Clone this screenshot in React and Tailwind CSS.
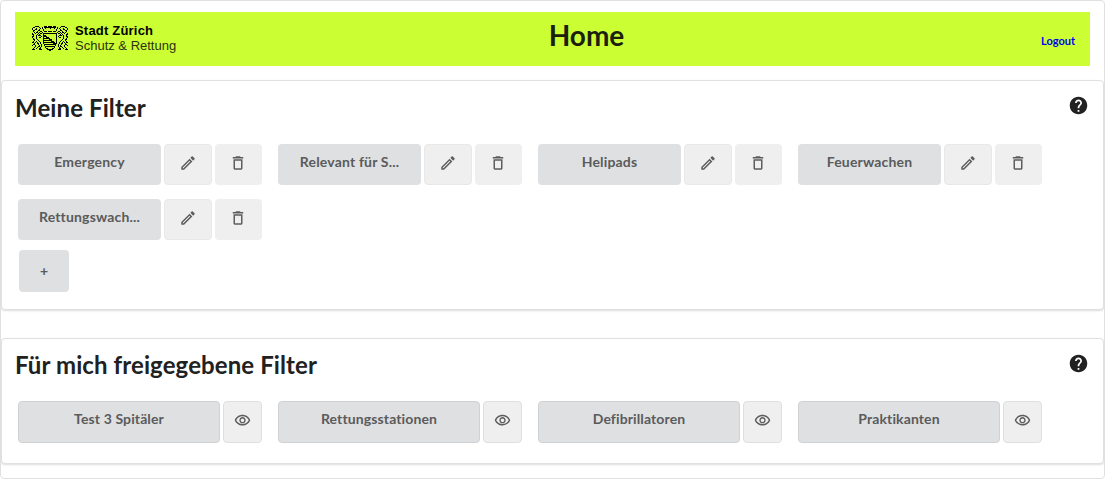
import React from "react";

const PATHS = {
  edit: "m14.06 9.02.92.92L5.92 19H5v-.92zM17.66 3c-.25 0-.51.1-.7.29l-1.83 1.83 3.75 3.75 1.83-1.83c.39-.39.39-1.02 0-1.41l-2.34-2.34c-.2-.2-.45-.29-.71-.29m-3.6 3.19L3 17.25V21h3.75L17.81 9.94z",
  trash: "M6 19c0 1.1.9 2 2 2h8c1.1 0 2-.9 2-2V7H6zM8 9h8v10H8zm7.5-5-1-1h-5l-1 1H5v2h14V4z",
  eye: "M12 6c3.79 0 7.17 2.13 8.82 5.5C19.17 14.87 15.79 17 12 17s-7.17-2.13-8.82-5.5C4.83 8.13 8.21 6 12 6m0-2C7 4 2.73 7.11 1 11.5 2.73 15.89 7 19 12 19s9.27-3.11 11-7.5C21.27 7.11 17 4 12 4m0 5c1.38 0 2.5 1.12 2.5 2.5S13.38 14 12 14s-2.5-1.12-2.5-2.5S10.62 9 12 9m0-2c-2.48 0-4.5 2.02-4.5 4.5S9.52 16 12 16s4.5-2.02 4.5-4.5S14.48 7 12 7",
  help: "M12 2C6.48 2 2 6.48 2 12s4.48 10 10 10 10-4.48 10-10S17.52 2 12 2m1 17h-2v-2h2zm2.07-7.75-.9.92C13.45 12.9 13 13.5 13 15h-2v-.5c0-1.1.45-2.1 1.17-2.83l1.24-1.26c.37-.36.59-.86.59-1.41 0-1.1-.9-2-2-2s-2 .9-2 2H8c0-2.21 1.79-4 4-4s4 1.79 4 4c0 .88-.36 1.68-.93 2.25",
};

function Icon({ name, className }) {
  return (
    <svg viewBox="0 0 24 24" fill="currentColor" className={className} aria-hidden="true">
      <path d={PATHS[name]} />
    </svg>
  );
}

// One supporter of the coat of arms, row by row on a one-unit grid.
const LION = [
  "...####....",
  ".##....#...",
  "#...#...#..",
  "#..##..#...",
  ".##...##...",
  ".#...#..##.",
  "..#.##.#..#",
  "#..#..#.##.",
  "##...#.#...",
  ".#..#.###..",
  "##..#....#.",
  "#...#..##..",
  ".#..#......",
  ".##..#.....",
  "..#...#....",
  ".#..#..#...",
  "##.#.#..#..",
  "..#..##.#..",
  ".##...#..#.",
  "#..#...#.#.",
  "...#..##.#.",
  "..#..#..#..",
  ".#..#..##..",
  "###....###.",
];

function Lion() {
  return LION.flatMap((row, y) =>
    [...row].map((cell, x) => cell === "#" && <rect key={x + "-" + y} x={x} y={y} width="1" height="1" />)
  );
}

function Crest() {
  return (
    <svg viewBox="0 0 36 26" className="mt-[14px] h-[26px] w-9 shrink-0" shapeRendering="crispEdges" aria-hidden="true">
      <Lion />
      <g transform="translate(36 0) scale(-1 1)"><Lion /></g>
      <g fill="none" stroke="#000">
        <path d="M12 .5H15M16 .5H20M21 .5H24M10.5 1V3M25.5 1V3M12 1.5H24M11.5 3V5M24.5 3V5M12 5.5H15M16 5.5H20M21 5.5H24M13.5 2V3M18 2V3M22.5 2V3" />
        <path d="M11 7.5H25M11.5 8V18M24.5 8V18M12.5 18V20M23.5 18V20M13.5 20V22M22.5 20V22M14 22.5H16M20 22.5H22M15 23.5H21M17 24.5H19" />
        <path d="M12 9.5H14M12 10.5H15M14 11.5H17M12 12.5H18M17 13.5H20M12 14.5H20M19 15.5H22M12 16.5H23M21 17.5H24M13 18.5H24M14 20.5H23" />
      </g>
    </svg>
  );
}

function Panel({ title, children, className, titleClass }) {
  return (
    <section className={"rounded border border-[#dfe0e1] bg-white pl-[14px] shadow-[0_1px_2px_rgba(34,36,38,0.15)] " + className}>
      <div className="flex h-[52px] items-start justify-between pr-[14px]">
        <h2 className={"-ml-px text-2xl leading-[30px] font-bold tracking-[0.1px] text-[#212121] " + titleClass}>{title}</h2>
        <Icon name="help" className="mt-[14px] size-[21px] text-[#212121]" />
      </div>
      {children}
    </section>
  );
}

function IconButton({ label, className, children }) {
  return (
    <button aria-label={label} className={"flex items-center justify-center rounded bg-[#efefef] pb-[3px] text-[#5d5d5d] " + className}>
      {children}
    </button>
  );
}

function OwnFilter({ label }) {
  return (
    <div className="flex h-[41px] w-[260px] gap-[3px] pl-[2px]">
      <button className="w-[143px] rounded bg-[#dfe0e1] pb-[5px] text-sm font-bold tracking-[0.17px] text-[#5a5b5c]">{label}</button>
      <IconButton label="Bearbeiten" className="w-12 border border-[#e8e8e8]">
        <Icon name="edit" className="size-[18px]" />
      </IconButton>
      <IconButton label="Löschen" className="w-[47px] pr-[0.5px]">
        <Icon name="trash" className="size-[18px]" />
      </IconButton>
    </div>
  );
}

function SharedFilter({ label }) {
  return (
    <div className="flex h-[42px] w-[260px] gap-[3px] pl-[2px]">
      <button className="w-[202px] rounded border border-[#cfd1d3] bg-[#dfe0e1] pb-[6px] text-sm font-bold tracking-[0.12px] text-[#5a5b5c]">{label}</button>
      <IconButton label="Ansehen" className="w-[39px] border border-[#dedfe0]">
        <Icon name="eye" className="size-[17px]" />
      </IconButton>
    </div>
  );
}

export default function App() {
  const own = ["Emergency", "Relevant für S...", "Helipads", "Feuerwachen", "Rettungswach..."];
  const shared = ["Test 3 Spitäler", "Rettungsstationen", "Defibrillatoren", "Praktikanten"];
  return (
    <main className="h-[479px] w-[1105px] overflow-hidden rounded border border-[#dfe0e1] bg-white font-['Lato',sans-serif]">
      <header className="mx-[14px] mt-[11px] grid h-[54px] grid-cols-3 bg-[#ccff33]">
        <div className="flex pl-[17px]">
          <Crest />
          <div className="ml-[7px] pt-[11px] font-['Liberation_Sans',Arial,sans-serif] text-[13px] leading-[15px] text-black">
            <div className="font-bold tracking-[0.2px]">Stadt Zürich</div>
            <div className="whitespace-nowrap text-[#2a3310]">Schutz &amp; Rettung</div>
          </div>
        </div>
        <h1 className="pt-[5px] pl-[68px] text-center text-[28px] leading-9 font-bold text-[#1b1f0c]">Home</h1>
        <a className="pt-[21px] pr-[15px] text-right text-[11px] leading-4 font-bold text-[#0000ee]">Logout</a>
      </header>

      <Panel title="Meine Filter" className="mt-[14px] h-[230px]" titleClass="pt-[12px]">
        <div className="mt-[11px] flex flex-wrap gap-y-[14px]">
          {own.map((label) => <OwnFilter key={label} label={label} />)}
        </div>
        <button className="mt-[10px] ml-[3px] h-[42px] w-[50px] rounded bg-[#dfe0e1] text-sm font-bold text-[#5a5b5c]">+</button>
      </Panel>

      <Panel title="Für mich freigegebene Filter" className="mt-[28px] h-[126px]" titleClass="pt-[11px]">
        <div className="mt-[10px] flex">
          {shared.map((label) => <SharedFilter key={label} label={label} />)}
        </div>
      </Panel>
    </main>
  );
}
